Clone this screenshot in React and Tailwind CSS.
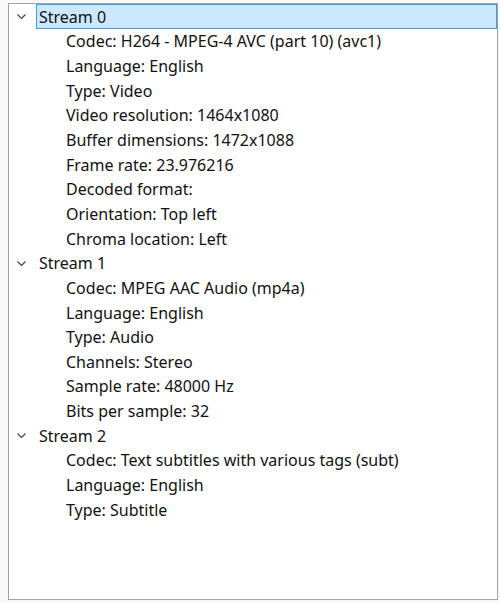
import React from "react";

const streams = [
  {
    name: "Stream 0",
    selected: true,
    props: [
      "Codec: H264 - MPEG-4 AVC (part 10) (avc1)",
      "Language: English",
      "Type: Video",
      "Video resolution: 1464x1080",
      "Buffer dimensions: 1472x1088",
      "Frame rate: 23.976216",
      "Decoded format:",
      "Orientation: Top left",
      "Chroma location: Left",
    ],
  },
  {
    name: "Stream 1",
    props: [
      "Codec: MPEG AAC Audio (mp4a)",
      "Language: English",
      "Type: Audio",
      "Channels: Stereo",
      "Sample rate: 48000 Hz",
      "Bits per sample: 32",
    ],
  },
  {
    name: "Stream 2",
    props: [
      "Codec: Text subtitles with various tags (subt)",
      "Language: English",
      "Type: Subtitle",
    ],
  },
];

const Chevron = () => (
  <svg width="9" height="5" viewBox="0 0 9 5" className="shrink-0">
    <polyline points="0.5,0.5 4.5,4.5 8.5,0.5" fill="none" stroke="#404040" strokeWidth="1.1" />
  </svg>
);

const App = () => {
  return (
    <div
      className="w-[500px] h-[603px] bg-[#f9f9f9] pl-[8px] pr-[2px] pt-[3px] pb-[3px] text-[16px] text-[#111]"
      style={{ fontFamily: '"Noto Sans", "Open Sans", sans-serif' }}
    >
      <div className="h-full border border-[#a3a3a3] bg-white">
        {streams.map((s) => (
          <div key={s.name}>
            <div className="flex items-center h-[24.65px]">
              <div className="w-[27px] flex pl-[8px] pt-[1px]">
                <Chevron />
              </div>
              <div
                className={
                  "flex-1 h-full flex items-center pl-[2px] pt-[1px] " +
                  (s.selected ? "bg-[#cce8ff] border border-[#3d9be8]" : "border border-transparent")
                }
              >
                {s.name}
              </div>
            </div>
            {s.props.map((p) => (
              <div key={p} className="flex items-center h-[24.65px] pt-[1px] pl-[57px] whitespace-nowrap">
                {p}
              </div>
            ))}
          </div>
        ))}
      </div>
    </div>
  );
};

export default App;
